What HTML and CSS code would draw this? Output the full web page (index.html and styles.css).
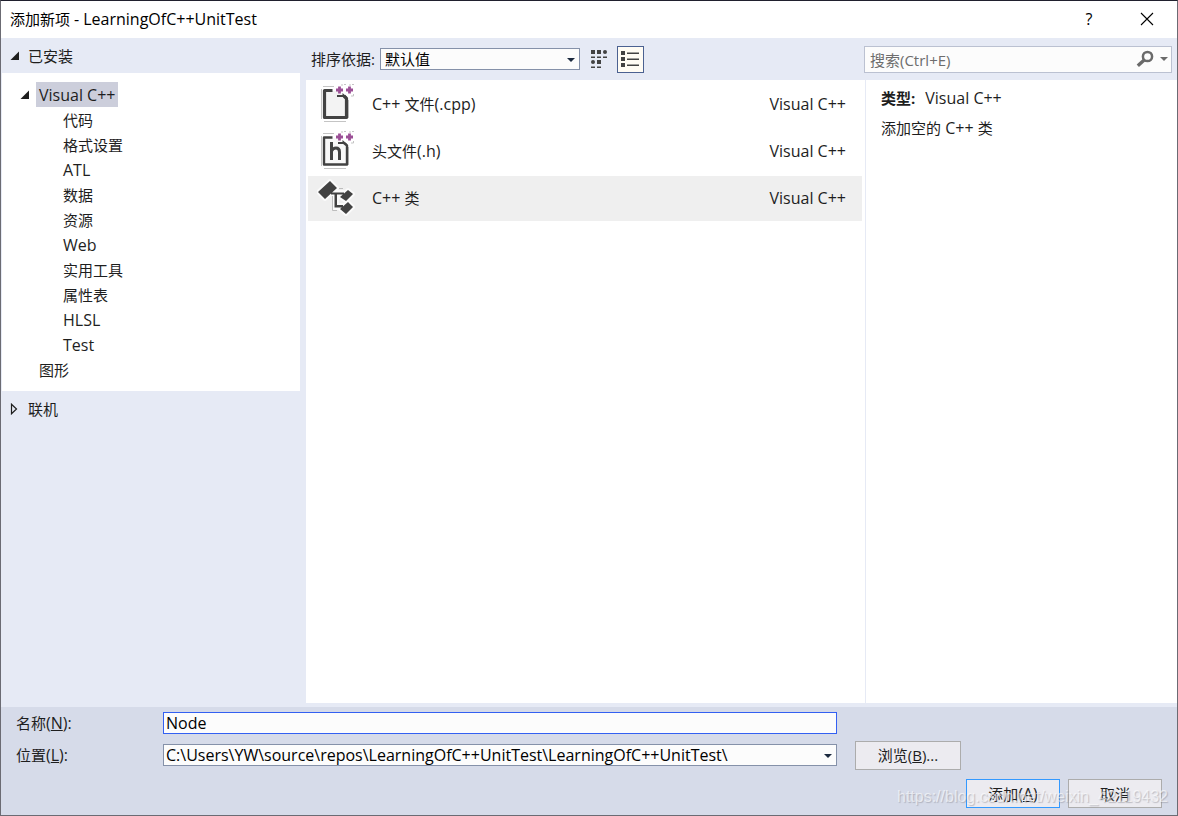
FILE: index.html
```html
<!DOCTYPE html>
<html lang="zh-CN">
<head>
<meta charset="utf-8">
<title>添加新项 - LearningOfC++UnitTest</title>
<link rel="stylesheet" href="styles.css">
</head>
<body>
<div class="dialog">
  <header class="titlebar">
    <h1 class="title">添加新项 <span class="latin">- LearningOfC++UnitTest</span></h1>
    <button class="title-button latin" type="button" aria-label="帮助">?</button>
    <button class="title-button" type="button" aria-label="关闭">
      <svg width="14" height="14" viewBox="0 0 14 14"><path d="M1 1L13 13M13 1L1 13" stroke="#000" stroke-width="1.1" fill="none"/></svg>
    </button>
  </header>

  <main class="main">
    <nav class="sidebar">
      <div class="group">
        <svg class="arrow" width="10" height="10" viewBox="0 0 10 10"><path d="M9 0.500V9H0.500Z" fill="#1e1e1e"/></svg>
        <span>已安装</span>
      </div>
      <ul class="tree">
        <li class="node">
          <svg class="arrow" width="10" height="10" viewBox="0 0 10 10"><path d="M9 0.500V9H0.500Z" fill="#1e1e1e"/></svg>
          <span class="node-label selected latin">Visual C++</span>
        </li>
        <li class="node child">代码</li>
        <li class="node child">格式设置</li>
        <li class="node child latin">ATL</li>
        <li class="node child">数据</li>
        <li class="node child">资源</li>
        <li class="node child latin">Web</li>
        <li class="node child">实用工具</li>
        <li class="node child">属性表</li>
        <li class="node child latin">HLSL</li>
        <li class="node child latin">Test</li>
        <li class="node leaf">图形</li>
      </ul>
      <div class="group">
        <svg class="arrow" width="10" height="12" viewBox="0 0 10 12"><path d="M1.500 1.200V10.800L6.500 6Z" fill="none" stroke="#1e1e1e" stroke-width="1.200"/></svg>
        <span>联机</span>
      </div>
    </nav>

    <section class="workspace">
      <div class="toolbar">
        <label for="sort">排序依据:</label>
        <div class="combo sort">
          <select id="sort"><option>默认值</option></select>
          <svg class="caret" width="8" height="4" viewBox="0 0 8 4"><path d="M0 0H8L4 4Z" fill="#1b293e"/></svg>
        </div>
        <button class="view" type="button" aria-label="小图标">
          <svg width="18" height="20" viewBox="0 0 18 20" fill="#424242"><path d="M1 1h4v4H1zM7 1h4v4H7zM1 7.500h4v1.500H1zM7 7.500h4v1.500H7zM13 7.500h4v1.500h-4zM7 11h4v4H7zM1 17.500h4v1.500H1zM7 17.500h4v1.500H7z"/><circle cx="15" cy="3" r="2"/><circle cx="3" cy="13" r="2"/></svg>
        </button>
        <button class="view active" type="button" aria-label="列表">
          <svg width="20" height="18" viewBox="0 0 20 18" fill="#424242"><path d="M1 1h4v4H1zM1 7h4v4H1zM1 13h4v4H1zM7 2.500h12v1.500H7zM7 8.500h12v1.500H7zM7 14.500h12v1.500H7z"/></svg>
        </button>
        <div class="search">
          <input type="text" aria-label="搜索" placeholder="搜索(Ctrl+E)">
          <svg width="18" height="18" viewBox="0 0 18 18" fill="none" stroke="#6a6a6a"><circle cx="11.500" cy="6.500" r="4.600" stroke-width="2.500"/><path d="M8.500 9.800L1.800 15.800" stroke-width="3.400"/></svg>
          <svg width="8" height="4" viewBox="0 0 8 4"><path d="M0 0H8L4 4Z" fill="#6a6a6a"/></svg>
        </div>
      </div>

      <div class="content">
        <ul class="templates">
          <li class="template">
            <svg class="icon" width="40" height="40" viewBox="0 0 40 40">
              <path d="M6 2.500H17M4.500 5V35M7 37.500H29M31.500 34V16M25 2V0M29 0.500H27M33 2V0M35 0.500H37M36.500 10V12H34" stroke="#c4c4c4" fill="none"/>
              <path d="M8 7H22L29 14V33H8Z" fill="#f3f3f3"/>
              <path d="M15.500 6.500H7.500V33.500H29.500V14.500L27 12" fill="none" stroke="#424242" stroke-width="3.200" stroke-linejoin="round"/>
              <path d="M20 13H30L25.500 9V11H20Z" fill="#424242"/>
              <path d="M19 6H26M22.500 2.500V9.500M29 6H36M32.500 2.500V9.500" stroke="#9b4f96" stroke-width="2.800"/>
            </svg>
            <span class="latin">C++ <span class="han">文件</span>(.cpp)</span><span class="language latin">Visual C++</span>
          </li>
          <li class="template">
            <svg class="icon" width="40" height="40" viewBox="0 0 40 40">
              <path d="M6 2.500H17M4.500 5V35M7 37.500H29M31.500 34V16M25 2V0M29 0.500H27M33 2V0M35 0.500H37M36.500 10V12H34" stroke="#c4c4c4" fill="none"/>
              <path d="M8 7H22L29 14V33H8Z" fill="#f8f8f8"/>
              <path d="M15.500 6.500H7V33.500H30V14.500L27 12" fill="none" stroke="#424242" stroke-width="2.400" stroke-linejoin="round"/>
              <path d="M21 13H30L25.500 9V11H21Z" fill="#424242"/>
              <path d="M14.500 11V29M14.500 20Q16 17 19 17Q22.500 17 22.500 21V29" fill="none" stroke="#424242" stroke-width="3"/>
              <path d="M19 6H26M22.500 2.500V9.500M29 6H36M32.500 2.500V9.500" stroke="#9b4f96" stroke-width="2.800"/>
            </svg>
            <span class="latin"><span class="han">头文件</span>(.h)</span><span class="language latin">Visual C++</span>
          </li>
          <li class="template current">
            <svg class="icon" width="40" height="40" viewBox="0 0 40 40">
              <g stroke="#fafafa" stroke-width="4" stroke-linejoin="round" fill="#424242">
                <path d="M13 3L20 10L8 21L1 14ZM31 12L36 16L29 23L23 19ZM31 24L36 29L29 36L23 31Z"/>
                <path d="M17 14H27V17H20V27H26V30H17Z"/>
              </g>
              <path d="M15.500 18V32.500H20M22 10.500H26" stroke="#bdbdbd" fill="none"/>
              <path d="M13 3L20 10L8 21L1 14ZM31 12L36 16L29 23L23 19ZM31 24L36 29L29 36L23 31ZM14 14.500H27V16.500H20V27H26V29.500H17.500V16.500H14Z" fill="#424242"/>
            </svg>
            <span class="latin">C++ <span class="han">类</span></span><span class="language latin">Visual C++</span>
          </li>
        </ul>
        <aside class="details">
          <p><strong>类型:</strong><span class="latin">Visual C++</span></p>
          <p>添加空的<span class="latin"> C++ </span>类</p>
        </aside>
      </div>
    </section>
  </main>

  <footer class="footer">
    <div class="fields">
      <label for="name">名称<span class="latin">(<u>N</u>):</span></label>
      <input class="name latin" id="name" type="text" value="Node">
      <label for="location">位置<span class="latin">(<u>L</u>):</span></label>
      <div class="combo">
        <select class="latin" id="location"><option>C:\Users\YW\source\repos\LearningOfC++UnitTest\LearningOfC++UnitTest\</option></select>
        <svg class="caret" width="8" height="4" viewBox="0 0 8 4"><path d="M0 0H8L4 4Z" fill="#1b293e"/></svg>
      </div>
      <button class="button browse" type="button">浏览(<u>B</u>)...</button>
    </div>
    <div class="actions">
      <button class="button primary" type="submit">添加<span class="latin">(<u>A</u>)</span></button>
      <button class="button" type="button">取消</button>
    </div>
    <span class="watermark">https://blog.csdn.net/weixin_42119432</span>
  </footer>
</div>
</body>
</html>
```

FILE: styles.css
```css
* {
  box-sizing: border-box;
}

body {
  margin: 0;
  color: #1e1e1e;
}

body,
button,
input,
select {
  font-family: "Open Sans", "Noto Sans CJK SC", sans-serif;
  font-size: 15px;
  line-height: 20px;
}

ul,
p,
h1 {
  margin: 0;
  padding: 0;
  list-style: none;
}

svg {
  display: block;
  flex: none;
}

.latin {
  font-size: 16px;
}

.han {
  font-size: 15px;
}

.dialog {
  display: flex;
  flex-direction: column;
  min-height: 100vh;
  border: 1px solid #6b6b73;
  border-top-color: #20202e;
  background: #e6eaf5;
}

.titlebar {
  display: flex;
  align-items: center;
  height: 37px;
  padding: 0 1px 1px 9px;
  background: #fff;
  color: #000;
}

.title {
  flex: 1;
  font-size: 15px;
  font-weight: 400;
}

.title-button {
  display: flex;
  align-items: center;
  justify-content: center;
  width: 58px;
  height: 36px;
  padding: 0;
  border: 0;
  background: none;
}

.main {
  display: flex;
  flex: 1;
}

.sidebar {
  width: 305px;
  padding-right: 6px;
}

.group {
  display: flex;
  align-items: center;
  gap: 8px;
  height: 35px;
  padding-left: 9px;
}

.tree {
  margin-left: 1px;
  padding: 9px 0;
  background: #fff;
}

.node {
  display: flex;
  align-items: center;
  gap: 6px;
  height: 25px;
  padding-left: 18px;
}

.child {
  padding-left: 61px;
}

.leaf {
  padding-left: 37px;
}

.node-label {
  padding: 3px 3px 2px;
}

.selected {
  background: #cccedb;
}

.workspace {
  display: flex;
  flex: 1;
  flex-direction: column;
  min-width: 0;
}

.toolbar {
  display: flex;
  align-items: center;
  height: 42px;
  padding: 0 5px;
}

.combo {
  position: relative;
  height: 22px;
}

.combo select {
  display: block;
  width: 100%;
  height: 22px;
  padding: 0 20px 0 2px;
  border: 1px solid #8591a9;
  border-radius: 0;
  appearance: none;
  background: #fcfcfc;
  color: #000;
}

.caret {
  position: absolute;
  top: 10px;
  right: 5px;
  pointer-events: none;
}

.sort {
  width: 200px;
  margin: 0 6px 0 5px;
}

.combo.sort select {
  padding-left: 4px;
}

.view {
  display: flex;
  align-items: center;
  justify-content: center;
  width: 27px;
  height: 27px;
  margin-right: 4px;
  padding: 0;
  border: 0;
  background: none;
}

.active {
  border: 1px solid #4b6191;
  background: #fffcf4;
}

.search {
  display: flex;
  align-items: center;
  gap: 6px;
  width: 308px;
  height: 27px;
  margin-left: auto;
  padding: 0 3px 0 4px;
  border: 1px solid #bbc1d1;
  background: #fcfcfc;
}

.search input {
  flex: 1;
  min-width: 0;
  padding: 1px 1px 0;
  border: 0;
  outline: 0;
  background: none;
}

.search input::placeholder {
  color: #6d6d6d;
}

.content {
  display: flex;
  flex: 1;
  margin-bottom: 4px;
  background: #fff;
}

.templates {
  flex: 1;
  padding: 2px 3px 2px 2px;
}

.template {
  display: flex;
  align-items: center;
  height: 45px;
  margin-bottom: 2px;
  padding: 0 16px 1px 9px;
}

.icon {
  margin-right: 15px;
}

.language {
  margin-left: auto;
}

.current {
  background: #efefef;
}

.details {
  display: flex;
  flex-direction: column;
  gap: 10px;
  width: 312px;
  padding: 8px 15px;
  border-left: 1px solid #e6eaf5;
}

.details strong {
  margin-right: 10px;
}

.footer {
  position: relative;
  padding: 5px 15px 7px;
  background: #d6dbe9;
}

.fields {
  display: grid;
  grid-template-columns: 147px minmax(0, 674px) 106px;
  grid-template-rows: 22px 30px;
  align-items: center;
  row-gap: 6px;
}

.fields .browse {
  width: 106px;
  margin-left: 18px;
}

.name {
  grid-column: 2 / 3;
  width: 100%;
  height: 22px;
  padding: 0 2px;
  border: 1px solid #3360f2;
  outline: 0;
  background: #fcfcfc;
  color: #000;
}

.fields label {
  grid-column: 1;
}

.button {
  width: 94px;
  height: 29px;
  padding: 0;
  border: 1px solid #acacac;
  background: #ecebf0;
  color: #1e1e1e;
}

.actions {
  display: flex;
  justify-content: flex-end;
  gap: 8px;
  margin-top: 9px;
}

.primary {
  border-color: #3399ff;
}

.watermark {
  position: absolute;
  right: 9px;
  bottom: 8px;
  color: rgba(255, 255, 255, 0.6);
  font-family: "Liberation Sans", sans-serif;
  font-size: 16px;
  text-shadow: 1px 1px 1px rgba(120, 120, 130, 0.4);
  pointer-events: none;
}
```
